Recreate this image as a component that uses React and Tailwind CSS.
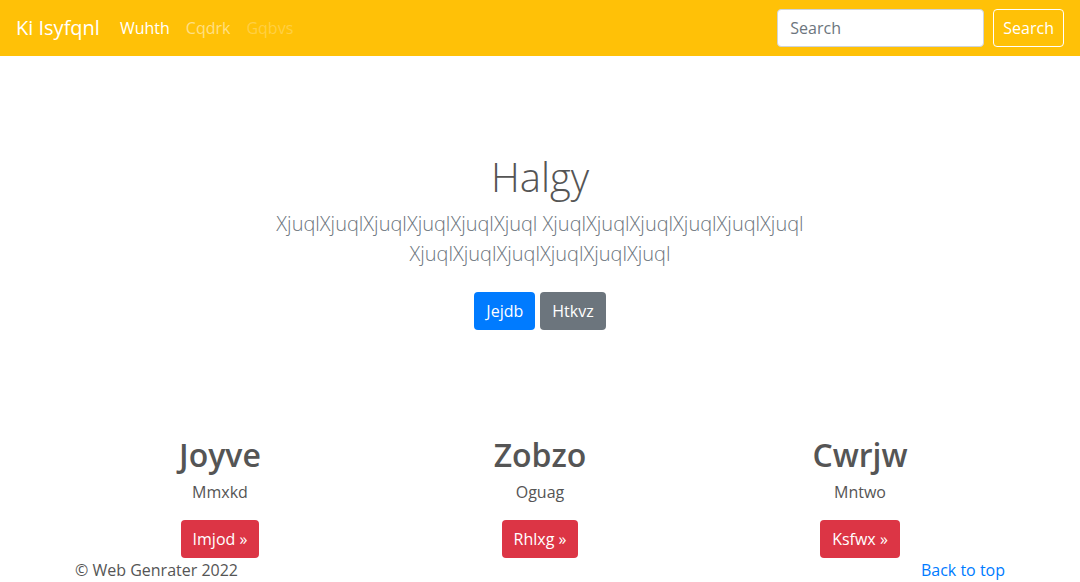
import React from 'react';

const features = [
  { title: 'Joyve', text: 'Mmxkd', action: 'Imjod' },
  { title: 'Zobzo', text: 'Oguag', action: 'Rhlxg' },
  { title: 'Cwrjw', text: 'Mntwo', action: 'Ksfwx' },
];

const word = 'Xjuql'.repeat(6);
const lead = [word, word, word].join(' ');

export default function App() {
  return (
    <div className="min-h-[582px] bg-white text-[#555] font-['Open_Sans',sans-serif] text-base leading-6">
      {/* Navbar */}
      <nav className="h-14 bg-[#ffc107] flex items-center px-4">
        <a className="text-white text-xl mr-3 leading-[30px]" href="#">Ki Isyfqnl</a>
        <ul className="flex items-center">
          <li><a className="px-2 text-white" href="#">Wuhth</a></li>
          <li><a className="px-2 text-white/50" href="#">Cqdrk</a></li>
          <li><a className="px-2 text-white/25" href="#">Gqbvs</a></li>
        </ul>
        <form className="ml-auto flex items-center">
          <input
            type="text"
            placeholder="Search"
            className="w-[207px] h-[38px] mr-[9px] px-3 bg-white border border-[#ced4da] rounded text-[#495057] placeholder:text-[#6c757d] outline-none"
          />
          <button type="button" className="h-[38px] px-[9px] border border-white rounded text-white">Search</button>
        </form>
      </nav>

      {/* Hero */}
      <section className="text-center pt-[97px] pb-[106px]">
        <div className="max-w-[640px] mx-auto">
          <h1 className="text-[40px] leading-[48px] font-light mb-2">Halgy</h1>
          <p className="text-xl leading-[30px] font-light text-[#6c757d] mb-[23px]">{lead}</p>
          <p className="flex justify-center gap-[5px]">
            <a href="#" className="h-[38px] px-3 flex items-center rounded bg-[#007bff] text-white">Jejdb</a>
            <a href="#" className="h-[38px] px-3 flex items-center rounded bg-[#6c757d] text-white">Htkvz</a>
          </p>
        </div>
      </section>

      {/* Features */}
      <div className="max-w-[960px] mx-auto grid grid-cols-3">
        {features.map((f) => (
          <div key={f.title} className="text-center px-[15px]">
            <h2 className="text-[32px] leading-[38px] font-semibold mb-[6px]">{f.title}</h2>
            <p className="mb-4">{f.text}</p>
            <a href="#" className="inline-flex items-center h-[38px] px-3 rounded bg-[#dc3545] text-white">
              {f.action} »
            </a>
          </div>
        ))}
      </div>

      {/* Footer */}
      <footer className="max-w-[960px] mx-auto px-[15px] flex justify-between">
        <p>© Web Genrater 2022</p>
        <a href="#" className="text-[#007bff]">Back to top</a>
      </footer>
    </div>
  );
}
